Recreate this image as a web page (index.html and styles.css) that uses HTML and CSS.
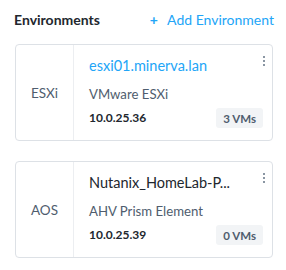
FILE: index.html
```html
<!DOCTYPE html>
<html lang="en">
<head>
    <meta charset="UTF-8">
    <meta name="viewport" content="width=device-width, initial-scale=1.0">
    <title>Environments</title>
    <link rel="stylesheet" href="styles.css">
</head>

<body>
    <div class="panel">
        <div class="panel-header">
            <h2>Environments</h2>
            <a class="add-link" href="#"><span class="plus">+</span> Add Environment</a>
        </div>

        <div class="env-card">
            <div class="env-type">ESXi</div>
            <div class="env-body">
                <div class="env-title link">esxi01.minerva.lan</div>
                <div class="env-kind">VMware ESXi</div>
                <div class="env-foot">
                    <span class="env-ip">10.0.25.36</span>
                    <span class="badge">3 VMs</span>
                </div>
            </div>
            <span class="kebab"><i></i><i></i><i></i></span>
        </div>

        <div class="env-card">
            <div class="env-type">AOS</div>
            <div class="env-body">
                <div class="env-title">Nutanix_HomeLab-P...</div>
                <div class="env-kind">AHV Prism Element</div>
                <div class="env-foot">
                    <span class="env-ip">10.0.25.39</span>
                    <span class="badge">0 VMs</span>
                </div>
            </div>
            <span class="kebab"><i></i><i></i><i></i></span>
        </div>
    </div>
</body>
</html>
```

FILE: styles.css
```css
body {
    margin: 0;
    background: #ffffff;
    font-family: Lato, "Open Sans", sans-serif;
    color: #22272e;
}

.panel {
    padding: 10px 13px 0 15px;
}

.panel-header {
    display: flex;
    justify-content: space-between;
    align-items: center;
    height: 18px;
    margin: 0 -1px 16px -1px;
}

h2 {
    margin: 0;
    font-size: 14px;
    font-weight: 700;
    color: #22272e;
}

.add-link {
    color: #22a5f7;
    text-decoration: none;
    font-size: 14px;
}

.plus {
    font-weight: 700;
    margin-right: 6px;
}

.env-card {
    position: relative;
    display: flex;
    border: 1px solid #dde1e6;
    border-radius: 4px;
    height: 95px;
    margin-bottom: 20px;
}

.env-type {
    width: 57px;
    border-right: 1px solid #eceef1;
    display: flex;
    align-items: center;
    justify-content: center;
    font-size: 13.5px;
    color: #4f5d6e;
}

.env-body {
    flex: 1;
    min-width: 0;
    padding: 12px 9px 0 15px;
}

.env-title {
    font-size: 14.5px;
    color: #22272e;
    white-space: nowrap;
    height: 18px;
}

.env-title.link {
    color: #22a5f7;
}

.env-kind {
    margin-top: 11px;
    font-size: 13.2px;
    color: #4f5d6e;
}

.env-foot {
    display: flex;
    justify-content: space-between;
    align-items: center;
    margin-top: 6px;
}

.env-ip {
    font-size: 12px;
    font-weight: 700;
    color: #22272e;
    margin-bottom: 2px;
}

.badge {
    background: #f2f4f6;
    color: #4f5d6e;
    font-size: 11.5px;
    font-weight: 700;
    border-radius: 3px;
    padding: 4px 7px 3px;
}

.kebab {
    position: absolute;
    top: 11px;
    right: 7px;
    display: flex;
    flex-direction: column;
    gap: 2px;
}

.kebab i {
    width: 2px;
    height: 2px;
    background: #8a96a3;
}
```
